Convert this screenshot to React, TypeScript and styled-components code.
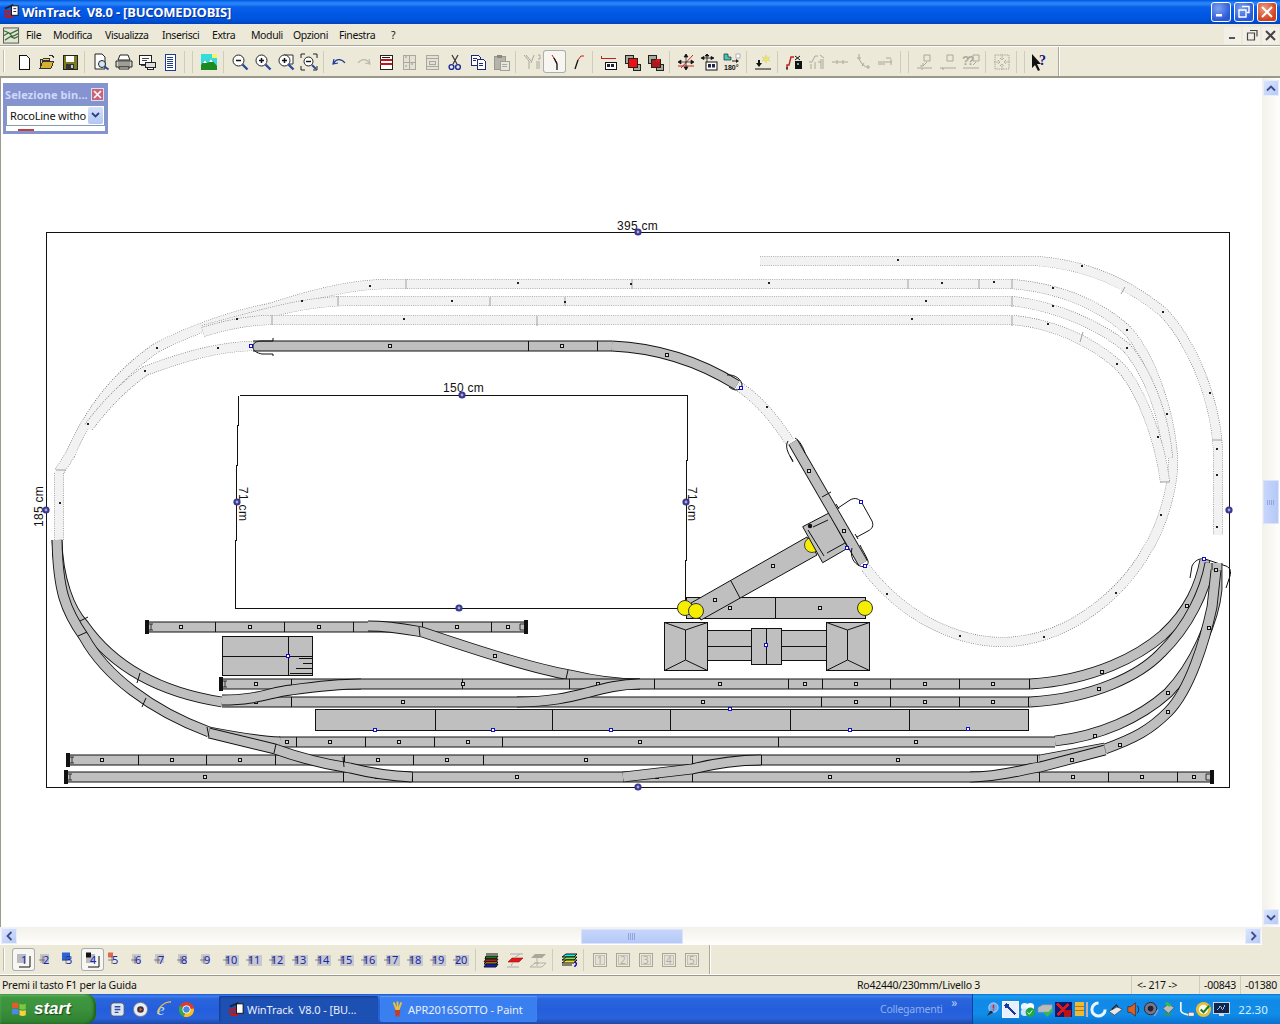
import React from 'react';
import styled, { createGlobalStyle } from 'styled-components';

const Global = createGlobalStyle`
  html, body { margin: 0; padding: 0; background: #fff; }
  * { box-sizing: border-box; }
`;
const UI = `"Noto Sans", "DejaVu Sans", sans-serif`;

const Win = styled.div`
  width: 1280px; height: 1024px; overflow: hidden; display: flex; flex-direction: column;
  background: #ece9d8; font-family: ${UI}; position: relative;
`;
const TitleBar = styled.div`
  height: 24px; flex: none; display: flex; align-items: center; padding: 0 3px 1px 3px;
  background: linear-gradient(#0053d8 0, #1f7cf6 2px, #2b86fb 4px, #0a5fe8 7px, #0058e6 14px, #0052da 20px, #0044bb 24px);
`;
const TitleText = styled.div`
  margin-left: 2px; color: #fff; font: bold 13px ${UI}; white-space: pre; flex: 1;
  letter-spacing: -0.2px; text-shadow: 1px 1px 0 #0a2f8f;
`;
const CapBtn = styled.div<{ $close?: boolean }>`
  width: 20px; height: 20px; margin-left: 3px; border: 1px solid #fff; border-radius: 3px;
  display: flex; align-items: center; justify-content: center;
  background: ${p => p.$close ? 'radial-gradient(circle at 35% 30%, #ee9a80, #d0421f 70%)' : 'radial-gradient(circle at 35% 30%, #7ea2f0, #2a59d8 70%)'};
`;
const MenuBar = styled.div`
  height: 23px; flex: none; display: flex; align-items: center; padding-left: 3px;
  border-bottom: 1px solid #fff; box-shadow: inset 0 -1px 0 #a7a595;
`;
const MenuItem = styled.div<{ $x: number }>`
  width: ${p => p.$x}px; flex: none; font-size: 10.5px; letter-spacing: -0.4px; color: #111; line-height: 16px; padding-left: 6px; white-space: nowrap;
`;
const MdiBtns = styled.div`
  margin-left: auto; display: flex; gap: 2px; padding-right: 1px;
`;
const MdiBtn = styled.div`
  width: 17px; height: 17px; display: flex; align-items: center; justify-content: center; background: #f2f0e6;
`;
const Toolbar = styled.div`
  height: 31px; flex: none; display: flex; align-items: center; padding-left: 12px; position: relative;
  border-bottom: 2px solid #9b988a;
  &::before { content: ''; position: absolute; left: 3px; top: 3px; bottom: 4px; width: 1px; background: #c0bdaf; box-shadow: 1px 0 0 #fff; }
`;
const ToolEnd = styled.div`
  width: 1px; height: 29px; background: #aca899; margin-left: 6px; box-shadow: 1px 0 0 #fff;
`;
const ToolBtn = styled.div<{ $active?: boolean }>`
  width: 23px; height: 23px; flex: none; display: flex; align-items: center; justify-content: center;
  border-radius: 3px;
  ${p => p.$active ? 'background: #f7f6f0; box-shadow: inset 0 0 0 1px #a9adb4;' : ''}
`;
const Sep = styled.div`
  width: 8px; height: 24px; flex: none; position: relative;
  &::after { content: ''; position: absolute; left: 3px; top: 1px; bottom: 1px; width: 1px; background: #cfccbc; }
`;
const Middle = styled.div`
  flex: 1; display: flex; min-height: 0; background: #fff;
`;
const Canvas = styled.div`
  flex: 1; position: relative; overflow: hidden; background: #fff; border-left: 1px solid #9c9a8e;
`;
const PlanSvg = styled.svg`
  display: block; margin-left: -1px;
`;
const Float = styled.div`
  position: absolute; left: 2px; top: 5px; width: 105px; height: 51px; background: #8594d0;
  padding: 3px; display: flex; flex-direction: column;
`;
const FloatHead = styled.div`
  display: flex; align-items: center; height: 17px; margin-left: -1px; justify-content: space-between;
  color: #cfd8f8; font: bold 11px ${UI}; white-space: nowrap; letter-spacing: 0.1px;
`;
const FloatClose = styled.div`
  width: 13px; height: 13px; margin-right: 1px; background: #c8657a; border: 1px solid #dde; display: flex; align-items: center; justify-content: center;
`;
const FloatBody = styled.div`
  background: #fff; flex: 1; position: relative; margin-top: 2px; overflow: hidden;
`;
const Combo = styled.div`
  height: 21px; border: 1px solid #7f9db9; background: #fff; display: flex; align-items: center; padding-left: 3px;
  font-size: 11px; letter-spacing: -0.2px; color: #111; white-space: nowrap; justify-content: space-between;
`;
const ComboArrow = styled.div`
  width: 15px; height: 17px; margin-right: 1px; background: linear-gradient(#d6e0fa, #b3c5f3); border-radius: 2px;
  display: flex; align-items: center; justify-content: center;
`;
const Sliver = styled.div`
  position: absolute; left: 12px; bottom: 0; width: 16px; height: 2px; background: #c04040;
`;
const VScroll = styled.div`
  width: 18px; flex: none; display: flex; flex-direction: column; padding: 2px 1px 2px 1px;
  background: linear-gradient(90deg, #f3f1ea, #fefefb);
`;
const ScrollBtn = styled.div`
  width: 16px; height: 16px; flex: none; display: flex; align-items: center; justify-content: center;
  background: linear-gradient(135deg, #dde6fd, #b6c8f5); border-radius: 2px; box-shadow: inset 0 0 0 1px #e8eefe;
`;
const VThumb = styled.div`
  width: 16px; height: 44px; margin-top: 384px; margin-bottom: auto; background: linear-gradient(90deg, #c8d6fb, #b4c8f6);
  border-radius: 2px; box-shadow: inset 0 0 0 1px #d9e3fd; display: flex; align-items: center; justify-content: center;
`;
const HScrollRow = styled.div`
  height: 18px; flex: none; display: flex; align-items: center; padding: 0 19px 0 1px; position: relative;
  background: linear-gradient(#f3f1ea, #fefefb);
`;
const HThumb = styled.div`
  width: 102px; height: 15px; margin-left: 564px; margin-right: auto; background: linear-gradient(#c8d6fb, #b4c8f6);
  border-radius: 2px; box-shadow: inset 0 0 0 1px #d9e3fd; display: flex; align-items: center; justify-content: center;
`;
const Corner = styled.div`
  position: absolute; right: 0; top: 0; bottom: 0; width: 18px; background: #ece9d8;
`;
const Grip = styled.div<{ $v?: boolean }>`
  ${p => p.$v ? 'width: 8px; height: 5px;' : 'width: 8px; height: 7px;'}
  background: repeating-linear-gradient(90deg, #8fa6dd 0 1px, transparent 1px 2px);
`;
const LayerBar = styled.div`
  height: 30px; flex: none; display: flex; align-items: center; padding-left: 12px; position: relative;
  border-bottom: 1px solid #fff;
  &::before { content: ''; position: absolute; left: 3px; top: 3px; bottom: 3px; width: 1px; background: #c0bdaf; box-shadow: 1px 0 0 #fff; }
`;
const StatusBar = styled.div`
  height: 19px; flex: none; display: flex; align-items: center; position: relative;
  border-top: 1px solid #9b988a; font-size: 10.5px; letter-spacing: -0.23px; color: #111;
`;
const StatusCell = styled.div<{ $w: number; $pl: number; $line?: boolean }>`
  width: ${p => p.$w}px; flex: none; padding-left: ${p => p.$pl}px; white-space: nowrap; line-height: 18px;
  ${p => p.$line ? 'border-left: 1px solid #cfccbc;' : ''}
`;
const Taskbar = styled.div`
  height: 30px; flex: none; display: flex; align-items: stretch; color: #fff;
  background: linear-gradient(#1f55c9 0, #3d80ee 2px, #2a64dc 5px, #245edb 16px, #2a63dc 24px, #1c49a8 30px);
`;
const StartBtn = styled.div`
  width: 96px; flex: none; display: flex; align-items: center; padding-left: 10px; gap: 4px;
  border-radius: 0 10px 10px 0; box-shadow: inset -2px 0 3px #1b5a1b, inset 0 2px 2px #6fbf6f;
  background: linear-gradient(#3f9a40, #3c913c 50%, #2d7f2f);
`;
const StartText = styled.div`
  font: italic bold 17px "Liberation Sans", sans-serif; color: #fff; text-shadow: 1px 1px 1px #1a4a1a;
`;
const Quick = styled.div`
  display: flex; align-items: center; padding-left: 10px; width: 123px; flex: none;
`;
const QuickIcon = styled.div`
  width: 23px; display: flex; justify-content: center;
`;
const TaskBtn = styled.div<{ $on?: boolean; $w: number }>`
  width: ${p => p.$w}px; flex: none; margin: 2px 2px 2px 0; display: flex; align-items: center; padding-left: 9px; gap: 2px;
  font-size: 11px; white-space: pre; border-radius: 2px; color: #e8eefc; letter-spacing: -0.1px;
  background: ${p => p.$on ? '#1d50b3' : '#3a7fef'};
  ${p => p.$on ? 'box-shadow: inset 1px 1px 2px #123a8a;' : 'box-shadow: inset 0 1px 1px #5f9bf5;'}
`;
const Links = styled.div`
  margin-left: auto; width: 93px; flex: none; display: flex; color: #8fb0ea; font-size: 10.5px; letter-spacing: -0.25px; align-items: center; position: relative; padding-left: 1px;
`;
const Chevron = styled.div`
  position: absolute; right: 15px; top: 2px; font-size: 12px; color: #b6cdf5; line-height: 14px;
`;
const Tray = styled.div`
  width: 308px; flex: none; display: flex; align-items: center; padding-left: 11px;
  background: linear-gradient(#0d6fd8 0, #18a0f0 2px, #1289e6 6px, #0f8de8 20px, #0b6fcf 30px);
  border-left: 1px solid #0a3f9a;
`;
const TrayIcon = styled.div`
  width: 17.6px; flex: none; display: flex; justify-content: center;
`;
const Clock = styled.div`
  margin-left: 8px; color: #d8ecfc; font-size: 11.5px;
`;

type Node = React.ReactNode;
const I = ({ c, s = 18 }: { c: Node; s?: number }) => (
  <svg width={s} height={s} viewBox="0 0 18 18" shapeRendering="crispEdges">{c}</svg>
);
const A = ({ c, s = 18 }: { c: Node; s?: number }) => (
  <svg width={s} height={s} viewBox="0 0 18 18">{c}</svg>
);
const G = '#aaa89c';
const lens = (
  <>
    <circle cx="7.5" cy="7.5" r="5.5" fill="#fff" stroke="#222" />
    <path d="M11.5 11.5l5 5" stroke="#2b4a9a" strokeWidth="2.4" />
  </>
);
const dis = (d: string) => <path d={d} fill="none" stroke={G} strokeWidth="1" />;

const icons: Record<string, Node> = {
  new: <I c={<path d="M4 2h7l3 3v11H4z" fill="#fff" stroke="#111" />} />,
  open: <I c={<><path d="M2 6h3l1-1h5v2H5l-3 8z" fill="#e8d070" stroke="#333" /><path d="M2 15l3-7h11l-3 7z" fill="#d8b030" stroke="#333" /><path d="M11 3l3-1 2 3" fill="none" stroke="#333" /></>} />,
  save: <I c={<><rect x="2" y="2" width="14" height="14" fill="#7c7c20" stroke="#222" /><rect x="5" y="3" width="8" height="6" fill="#fff" /><rect x="5" y="11" width="8" height="5" fill="#333" /><rect x="10" y="12" width="2" height="3" fill="#ccc" /></>} />,
  preview: <A c={<><path d="M3 1h7l3 3v12H3z" fill="#fff" stroke="#222" /><circle cx="10" cy="11" r="3.5" fill="#cfe8f8" stroke="#222" /><path d="M12.5 13.5l4 3" stroke="#2b4a9a" strokeWidth="2" /></>} />,
  print: <A c={<><path d="M5 2h8l2 5H3z" fill="#fff" stroke="#222" /><path d="M1 8h16v6H1z" fill="#d8d5c8" stroke="#222" /><path d="M4 14h10v2H4z" fill="#fff" stroke="#222" /><path d="M3 10h12M3 12h12" stroke="#666" /></>} />,
  setup: <I c={<><rect x="1" y="2" width="12" height="9" fill="#fff" stroke="#222" /><path d="M3 12h7M4 5h7M4 7h5" stroke="#444" /><rect x="7" y="9" width="10" height="5" fill="#ddd" stroke="#222" /><path d="M9 14h6v2H9z" fill="#fff" stroke="#222" /></>} />,
  list: <I c={<><rect x="4" y="1" width="10" height="16" fill="#fff" stroke="#223a8a" /><path d="M6 4h6M6 6h6M6 8h6M6 10h6M6 12h6M6 14h6" stroke="#223a8a" /></>} />,
  pic: <A c={<><rect x="1" y="1" width="16" height="16" fill="#30d8e8" /><rect x="1" y="1" width="16" height="5" fill="#30e0d8" /><rect x="12" y="1" width="5" height="4" fill="#f4f070" /><path d="M1 17V12l4-5 3 3 3-4 6 7v4z" fill="#1c8a20" /><path d="M5 7l2 3H3zM11 6l2 3H9z" fill="#fff" /></>} />,
  zo: <A c={<>{lens}<path d="M5 7.5h5" stroke="#111" strokeWidth="1.5" /></>} />,
  zi: <A c={<>{lens}<path d="M5 7.5h5M7.5 5v5" stroke="#111" strokeWidth="1.5" /></>} />,
  zw: <A c={<><path d="M7 2h9v9h-5" fill="#fff" stroke="#333" />{lens}<path d="M5 7.5h5M7.5 5v5" stroke="#111" strokeWidth="1.5" /></>} />,
  zf: <A c={<><path d="M1 5V1h4M13 1h4v4M1 13v4h4M13 17h4v-4" fill="none" stroke="#222" /><circle cx="8.5" cy="8.5" r="4.5" fill="#fff" stroke="#222" /><path d="M6 8.5h5" stroke="#111" strokeWidth="1.4" /><path d="M12 12l4 4" stroke="#2b4a9a" strokeWidth="2" /></>} />,
  undo: <A c={<path d="M3 6l-1 5 5-1M3 10c2-4 7-5 11 0" fill="none" stroke="#1c3a9a" strokeWidth="1.2" />} />,
  redo: <A c={<path d="M15 6l1 5-5-1M15 10c-2-4-7-5-11 0" fill="none" stroke="#bbb9ae" strokeWidth="1.2" />} />,
  redd: <I c={<><rect x="3" y="2" width="12" height="14" fill="#fff" stroke="#222" /><path d="M3 6h12v2H3zM3 10h12v2H3z" fill="#c01818" /><path d="M5 4h8" stroke="#222" /></>} />,
  dd1: <I c={<><rect x="3" y="2" width="12" height="14" fill="#e4e2d4" stroke={G} /><path d="M9 2v14M3 9h12" stroke={G} /><path d="M5 4h2M11 11h2M5 13h2" stroke="#bbb" strokeWidth="2" /></>} />,
  dd2: <I c={<><rect x="3" y="2" width="12" height="14" fill="#e4e2d4" stroke={G} /><path d="M3 5h12M3 13h12M6 8h6v3H6z" fill="none" stroke={G} /></>} />,
  cut: <A c={<><path d="M6 2l5 9M12 2L7 11" stroke="#333" strokeWidth="1.2" /><circle cx="5.5" cy="14" r="2.4" fill="none" stroke="#1c2a9a" strokeWidth="1.4" /><circle cx="12" cy="14" r="2.4" fill="none" stroke="#1c2a9a" strokeWidth="1.4" /></>} />,
  copy: <I c={<><path d="M2 2h7l2 2v8H2z" fill="#fff" stroke="#1c2a7a" /><path d="M8 6h6l2 2v8H8z" fill="#fff" stroke="#1c2a7a" /><path d="M4 5h4M4 7h3M10 10h4M10 12h4" stroke="#1c2a7a" /></>} />,
  paste: <I c={<><rect x="2" y="3" width="11" height="13" fill="#b6b4aa" stroke="#9a988c" /><rect x="5" y="2" width="5" height="3" fill="#8a887c" /><rect x="8" y="8" width="9" height="9" fill="#e8e6da" stroke="#a0a094" /><path d="M10 11h5M10 13h5" stroke="#aaa" /></>} />,
  sw: <A c={dis('M1 2l5 6v8M3 2l5 6M11 2l-3 8M15 2h2v4h-2M14 8v8M16 8v8')} />,
  cr: <A c={<><path d="M6 2l5 8" stroke="#c02020" strokeWidth="1" fill="none" /><path d="M8 5l3 6v6" stroke="#111" strokeWidth="1.3" fill="none" /></>} />,
  cl: <A c={<><path d="M9 7l3-4h3" stroke="#c02020" fill="none" /><path d="M9 7l-2 6-1 3" stroke="#111" strokeWidth="1.3" fill="none" /></>} />,
  rail: <I c={<><path d="M1 3v2h14v1" stroke="#c02020" fill="none" /><rect x="5" y="9" width="11" height="7" fill="#fff" stroke="#111" /><rect x="7" y="11" width="3" height="3" fill="#223" /><rect x="11" y="11" width="3" height="3" fill="#223" /></>} />,
  sq1: <I c={<><rect x="2" y="2" width="8" height="8" fill="#a8a89c" stroke="#222" /><rect x="10" y="11" width="7" height="6" fill="#a8a89c" stroke="#222" /><rect x="5" y="5" width="9" height="9" fill="#ee1010" stroke="#222" /></>} />,
  sq2: <I c={<><rect x="2" y="2" width="8" height="8" fill="#a8a89c" stroke="#222" /><rect x="10" y="11" width="7" height="6" fill="#a8a89c" stroke="#222" /><rect x="5" y="6" width="9" height="8" fill="#b01818" stroke="#222" /><rect x="10" y="6" width="4" height="3" fill="#d01818" /></>} />,
  mv: <A c={<><path d="M1 13h16" stroke="#d02020" /><path d="M4 15l12-13" stroke="#d02020" /><path d="M9 1v16M2 9h14M9 1l-2 3h4zM9 17l-2-3h4zM1 9l3-2v4zM17 9l-3-2v4z" fill="#111" stroke="#111" strokeWidth=".7" /></>} />,
  mvb: <A c={<><path d="M7 1v9M2 5h11M7 1L5 3h4zM1 5l3-1.5v3zM14 5l-3-1.5v3z" fill="#111" stroke="#111" strokeWidth=".8" /><rect x="6" y="9" width="11" height="8" fill="#fff" stroke="#111" /><rect x="8" y="11" width="3" height="3.5" fill="#224" /><rect x="12" y="11" width="3" height="3.5" fill="#224" /></>} />,
  rot: <svg width="18" height="18" viewBox="0 0 18 18"><path d="M1 1h4v3h3v3H1z" fill="#40c8b8" stroke="#222" strokeWidth=".7" /><path d="M9 8h4" stroke="#222" /><path d="M13 6l3 2-3 2z" fill="#222" /><rect x="13" y="1" width="4" height="4" fill="#fff" stroke="#999" strokeWidth=".7" /><text x="1" y="17" fontSize="7" fontWeight="bold" fontFamily="Liberation Sans" fill="#111">180°</text></svg>,
  star: <A c={<><path d="M12 2l1 3 3-1-2 2 2 2-3-1-1 3-1-3-3 1 2-2-2-2 3 1z" fill="#f0e860" stroke="#d8d070" strokeWidth=".6" /><path d="M1 16h16" stroke="#111" /><path d="M5 7v4" stroke="#111" strokeWidth="2" /><path d="M2 10h6l-3 4z" fill="#111" /></>} />,
  red2: <A c={<><path d="M2 16v-4h2l2-8h3" stroke="#c02020" strokeWidth="1.4" fill="none" /><path d="M2 17v-3" stroke="#111" /><path d="M10 3l5 4M15 3l-5 4" stroke="#111" /><rect x="10" y="8" width="7" height="8" fill="#111" /><rect x="12" y="10" width="2" height="2" fill="#6aa" /></>} />,
  d1: <A c={dis('M1 9h3l3-6h3M3 16v-5M7 16v-7M12 2l4 3M15 6v10M13 6v10M10 9h3')} />,
  d2: <A c={dis('M1 9h16M6 7v4M12 7v4')} />,
  d3: <A c={dis('M5 1v5l3 5 4 3h4M3 5h4M10 10l-2 3M14 12v4')} />,
  d4: <A c={dis('M1 11h7M9 5h5M1 9h14M14 6v6')} />,
  b1: <A c={dis('M8 2h6v6H8zM1 15h5v2M6 15h10M11 9l-4 4M4 13h3v-3')} />,
  b2: <A c={dis('M8 2h6v6H8zM1 15h3v2M3 15h14')} />,
  b3: <svg width="18" height="18" viewBox="0 0 18 18"><text x="0" y="12" fontSize="12" fontWeight="bold" fontFamily="Liberation Sans" fill={G}>?</text><text x="5" y="12" fontSize="12" fontWeight="bold" fontFamily="Liberation Sans" fill={G}>?</text><path d="M11 2h6v6h-6zM1 15h16M14 9l-3 3" fill="none" stroke={G} /></svg>,
  b4: <A c={<path d="M2 2h14v14H2zM9 1v6M7 5l2 2 2-2M9 17v-6M7 13l2-2 2 2M1 9h6M5 7l2 2-2 2M17 9h-6M13 7l-2 2 2 2" fill="none" stroke={G} strokeDasharray="1.5 .8" />} />,
  help: <svg width="20" height="20" viewBox="0 0 20 20"><path d="M1 2v14l3-3 3 6 2-1-3-6h4z" fill="#111" /><text x="8" y="13" fontSize="14" fontWeight="bold" fontFamily="Liberation Serif" fill="#101080">?</text></svg>,
};

const top = ['new','open','save','|','preview','print','setup','list','|','|','pic','|','zo','zi','zw','zf','|','undo','redo','redd','dd1','dd2','cut','copy','paste','|','sw','cr*','cl','|','rail','sq1','sq2','|','mv','mvb','rot','|','star','|','red2','d1','d2','d3','d4','|','|','b1','b2','b3','|','b4','|','|','help'];

const chipColor = (n: number) => n === 3 ? '#2a62d8' : n === 4 ? '#111' : n === 5 ? '#e06848' : '#b8bac4';
const LayerIcon = ({ n, on }: { n: number; on: boolean }) => (
  <svg width="18" height="18" viewBox="0 0 18 18">
    <rect x={n > 9 ? 3 : 2} y={n > 9 ? 4 : 3} width={n > 9 ? 14 : 9} height={n > 9 ? 11 : 9} fill={on ? '#b8bac4' : n > 5 ? '#c8c9cf' : n === 2 ? '#c2c3cb' : 'transparent'} />
    {n === 3 || n === 4 || n === 5 ? <rect x={n === 4 ? 2 : 1} y="1.5" width={n === 3 ? 8 : 5} height={n === 3 ? 8 : 5} fill={chipColor(n)} /> : null}
    {on ? <path d="M4 16h11v-11" fill="none" stroke="#111" /> : <path d="M1 9h6M5 5v8" stroke="#444" strokeWidth=".6" />}
    <text x={n > 9 ? 3 : on ? 6 : 5} y="13" fontSize="11" letterSpacing="-.4" fontFamily="Noto Sans" fill="#1a28a8">{n}</text>
  </svg>
);
const BoxIcon = ({ n }: { n: number }) => (
  <svg width="16" height="16" viewBox="0 0 16 16">
    <rect x="1.5" y="1.5" width="13" height="13" fill="none" stroke="#a8a69a" />
    <rect x="3.5" y="3.5" width="9" height="9" fill="#e4e2d4" stroke="#c4c2b6" />
    <text x="5" y="12" fontSize="10" fontFamily="Noto Sans" fill="#b0aea2">{n}</text>
  </svg>
);
const lay1 = <A c={<><path d="M3 5h12l-2 3H2z" fill="#1a7a1a" stroke="#111" /><path d="M3 8h12l-2 3H1z" fill="#c01818" stroke="#111" /><path d="M3 11h12l-2 2H1z" fill="#f0e030" stroke="#111" /><path d="M3 13h12l-2 3H1z" fill="#1818d0" stroke="#111" /><path d="M3 3h12" stroke="#111" /></>} />;
const lay2 = <A c={<><path d="M4 3h13" stroke="#aaa" /><path d="M6 7h11l-4 4H2z" fill="#e01818" stroke="#a01010" strokeWidth=".6" /><path d="M1 16h12M7 11l-2 4M14 3L8 7" stroke="#aaa" /></>} />;
const lay3 = <A c={<><path d="M6 3h11l-4 4H2z" fill="#a8a89c" /><path d="M1 16h12l4-4H6zM8 7v8M5 12h5" fill="none" stroke="#b4b2a6" /></>} />;
const lay4 = <A c={<><path d="M6 3h11l-3 3H2z" fill="#20e8e0" stroke="#111" /><path d="M6 6h11l-3 3H2z" fill="#80e840" stroke="#111" /><path d="M6 9h11l-3 3H2z" fill="#f0e030" stroke="#111" /><path d="M2 14h10" stroke="#111" /><path d="M14 11c3 0 3 3 1 4v1" stroke="#1818b0" strokeWidth="1.6" fill="none" /></>} />;

const Track = ({ d, w = 9 }: { d: string; w?: number }) => (
  <g fill="none">
    <path d={d} stroke="#111" strokeWidth={w + 1.8} />
    <path d={d} stroke="#bfbfbf" strokeWidth={w} />
  </g>
);
const Ghost = ({ d, w = 9 }: { d: string; w?: number }) => (
  <g fill="none">
    <path d={d} stroke="#6f6f6f" strokeWidth={w + 1} strokeDasharray="1 1.2" />
    <path d={d} stroke="#f2f2f2" strokeWidth={w - 0.2} />
  </g>
);
const Marks = ({ pts, blue, s = 3 }: { pts: number[][]; blue?: boolean; s?: number }) => (
  <g fill={blue ? '#fff' : '#ddd'} stroke={blue ? '#1010c8' : '#111'} strokeWidth="1" shapeRendering="crispEdges">
    {pts.map(([x, y], i) => <rect key={i} x={x - s / 2 - .5} y={y - s / 2 - .5} width={s} height={s} />)}
  </g>
);
const Tiny = ({ pts }: { pts: number[][] }) => (
  <g fill="#222">{pts.map(([x, y], i) => <rect key={i} x={x - 1} y={y - 1} width="2" height="2" />)}</g>
);
const CNode = ({ x, y }: { x: number; y: number }) => (
  <g><circle cx={x} cy={y} r="3.6" fill="#38388e" /><circle cx={x} cy={y} r="1.4" fill="#a8a8d8" /></g>
);
const HRow = ({ y, x0, x1, ticks, marks }: { y: number; x0: number; x1: number; ticks: number[]; marks: number[] }) => (
  <>
    <Track d={`M${x0} ${y}H${x1}`} />
    <g stroke="#111" shapeRendering="crispEdges">{ticks.map(t => <path key={t} d={`M${t + .5} ${y - 5}V${y + 5}`} />)}</g>
    <Marks pts={marks.map(m => [m, y])} />
  </>
);
const Bumper = ({ x, y, flip }: { x: number; y: number; flip?: boolean }) => (
  <g>
    <rect x={x} y={y - 7} width="4" height="14" fill="#111" />
    <path d={flip ? `M${x} ${y - 3}h-4M${x} ${y + 3}h-4M${x - 4} ${y - 3}v6` : `M${x + 4} ${y - 3}h4M${x + 4} ${y + 3}h4M${x + 6} ${y - 3}v6`} stroke="#111" fill="none" strokeWidth=".8" />
  </g>
);
const Lbl = ({ x, y, t, rot }: { x: number; y: number; t: string; rot?: number }) => (
  <text x={x} y={y} fontSize="12" letterSpacing=".3" fontFamily="Liberation Sans" fill="#111" transform={rot ? `rotate(${rot} ${x} ${y})` : undefined}>{t}</text>
);

const ghostPaths = [
  'M760 261H1037C1090 265 1130 285 1163 312C1190 340 1215 395 1218 450V535',
  'M59 540V472L70 455C85 420 110 380 156 348C180 335 230 315 270 308C310 295 350 284 390 284H1012C1060 288 1100 305 1127 330C1150 355 1170 410 1173 458C1174 490 1160 530 1147 550C1125 590 1070 642 1002 642C960 642 905 620 865 567',
  'M203 330C260 315 300 302 345 301H1012C1055 306 1100 325 1127 348C1150 375 1165 420 1168 458',
  'M203 332C225 325 250 320 273 320H1012C1050 323 1090 340 1117 364C1140 385 1160 440 1165 482',
  'M252 346C215 347 180 358 145 371C125 385 105 405 88 428',
  'M738 386C760 400 775 420 790 442',
];

const Plan = () => (
  <PlanSvg width="1262" height="849" viewBox="0 78 1262 849">
    <g fill="none" stroke="#111" shapeRendering="crispEdges">
      <rect x="46.5" y="232.5" width="1183" height="555" />
      <path d="M239.5 395.5H687.5V460H686.5V560H685.5V608.5H235.5V540H236.5V465H237.5V425H238.5V395.5" />
    </g>
    {ghostPaths.map((d, i) => <Ghost key={i} d={d} />)}
    <g stroke="#a0a0a0" fill="none">
      <path d="M406 279v10M632 279v10M908 279v10M979 279v10M1012 279v10M338 296v10M565 297v9M1012 297v10M272 315v10M537 316v10M1012 316v10M56 470h10M1212 440h10M1160 482h10M490 297v9M1083 332l-3 10M1125 287l-4 7" />
    </g>
    <Tiny pts={[[898,260],[1082,266],[1163,312],[1210,393],[1217,449],[1217,475],[1217,527],[769,283],[942,283],[994,282],[1053,288],[1127,330],[1167,414],[926,301],[1053,306],[1127,348],[912,319],[1048,324],[1117,364],[1158,437],[1161,515],[370,286],[518,283],[452,301],[404,319],[302,301],[237,319],[157,348],[145,371],[218,348],[88,424],[60,503],[631,284],[565,302],[1116,593],[1044,637],[960,636],[887,594],[767,407]]} />

    <rect x="686.5" y="597.5" width="179" height="21" fill="#bfbfbf" stroke="#111" />
    <path d="M775.5 597V618" stroke="#111" />
    <path d="M691 603L807 537L817 555L701 620Z" fill="#bfbfbf" stroke="#111" />
    <circle cx="812" cy="545" r="7.5" fill="#f5ee00" stroke="#444" />
    <path d="M802.7 526.7L829 513L848 548L822.7 562.7Z" fill="#bfbfbf" stroke="#111" />
    <g stroke="#111" fill="none" strokeWidth="1">
      <path d="M808 530L824 556M813 527L828 520M827 553L845 543M731 581L740 598" />
    </g>
    <Track d="M793 442L863 563" w={9} />
    <path d="M822 497l9 -5" stroke="#111" />
    <circle cx="685" cy="608" r="7.5" fill="#f5ee00" stroke="#333" />
    <circle cx="696" cy="611" r="7.5" fill="#f5ee00" stroke="#333" />
    <circle cx="865" cy="608" r="7.5" fill="#f5ee00" stroke="#333" />
    <Marks pts={[[773,566],[715,600],[730,608],[820,608],[809,471],[844,531]]} />
    <circle cx="810" cy="526" r="2.2" fill="#111" />

    <g fill="#bfbfbf" stroke="#111" shapeRendering="crispEdges">
      <rect x="706.5" y="630.5" width="120" height="30" />
      <path d="M706.5 646.5H826.5" fill="none" />
      <rect x="751.5" y="628.5" width="30" height="36" />
      <path d="M766.5 628V664" fill="none" />
    </g>
    <g fill="#bfbfbf" stroke="#111">
      <rect x="664.5" y="622.5" width="43" height="48" />
      <rect x="826.5" y="622.5" width="43" height="48" />
      <path d="M664.5 622.5L685.5 630L707.5 622.5M664.5 670.5L685.5 660L707.5 670.5M685.5 630V660M826.5 622.5L847.5 630L869.5 622.5M826.5 670.5L847.5 660L869.5 670.5M847.5 630V660" fill="none" />
    </g>
    <Marks blue pts={[[766,645]]} />

    <HRow y={346} x0={253} x1={612} ticks={[528,597]} marks={[390,562]} />
    <Track d="M612 346C660 348 700 362 737 385" />
    <Marks pts={[[667,355]]} />
    <g fill="none" stroke="#111">
      <path d="M273 338V341H262C256 341 253 343 253 347C253 351 257 353 262 354H273V356" />
      <path d="M727 375C735 374 742 380 742 385C742 390 735 392 729 387" />
      <path d="M788 441C785 446 787 452 793 461M795 438C800 441 803 447 805 453M790 456l3 6" />
      <path d="M838 508L850 500C855 497 860 499 862 503L872 521C874 526 872 529 868 531L857 537M836 504l3 5M855 534l3 5" />
      <path d="M852 548C850 556 853 563 860 566C865 568 869 565 868 561C866 555 862 550 860 545" />
      <path d="M1190 578L1192 566C1195 560 1200 558 1205 559L1226 566C1231 568 1231 572 1230 576L1226 588" />
    </g>

    <HRow y={627} x0={147} x1={526} ticks={[215,284,353,422,491]} marks={[181,250,319,388,457,508]} />
    <Track d="M368 626C390 626 405 629 422 632C470 648 530 668 570 675C595 681 620 684 640 684" />
    <path d="M419 627l1 9M568 670l-2 9" stroke="#111" />
    <Marks pts={[[495,656]]} />
    <Bumper x={145} y={627} /><Bumper x={524} y={627} flip />

    <Track d="M222 702C145 690 105 655 84 625C70 610 58 580 57 540" />
    <Track d="M209 732C150 710 105 675 84 637C65 610 58 590 57 540" />
    <path d="M80 621l8 -4M78 636l9 -4M140 673l-3 10M146 698l-4 9" stroke="#111" />
    <Track d="M1030 684C1095 680 1140 655 1163 635C1190 610 1200 585 1205 560" />
    <Track d="M1030 702C1095 698 1140 675 1161 653C1190 625 1205 590 1210 563" />
    <Track d="M1055 741C1100 736 1140 718 1168 693C1195 665 1214 620 1217 590V563" />
    <Track d="M1105 749C1135 738 1150 730 1168 712C1190 690 1205 640 1212 607L1216 570" />

    <HRow y={684} x0={221} x1={1030} ticks={[291,360,462,569,654,788,822,890,959,1029]} marks={[256,463,598,720,805,856,925,993]} />
    <HRow y={702} x0={222} x1={1030} ticks={[291,517,821,890,959,1028]} marks={[256,403,552,703,856,925,993]} />
    <Track d="M222 700C260 700 270 692 291 690C320 686 340 684 361 684" />
    <Track d="M517 702C550 702 570 697 586 693C605 688 620 684 640 684" />
    <Bumper x={219} y={684} />
    <g stroke="#111" strokeWidth="1" shapeRendering="crispEdges">
      <rect x="315.5" y="709.5" width="713" height="21" fill="#bfbfbf" />
      <path d="M435.5 709V731M552.5 709V731M670.5 709V731M790.5 709V731M909.5 709V731" />
    </g>
    <Marks blue pts={[[375,730],[493,730],[611,730],[850,730],[968,729],[730,709]]} />

    <HRow y={742} x0={279} x1={1055} ticks={[296,365,434,502,778]} marks={[287,330,399,468,640,916]} />
    <HRow y={760} x0={68} x1={1040} ticks={[138,206,275,344,413,483,692,761,1037]} marks={[102,172,240,309,378,447,586,726,898,1072]} />
    <HRow y={777} x0={66} x1={1212} ticks={[343,412,623,692,970,1039,1108,1177]} marks={[205,377,517,657,830,1004,1073,1142,1194]} />
    <Track d="M209 732C235 737 260 741 280 742" />
    <Track d="M209 733L275 749C300 758 330 765 350 768C370 773 390 776 412 777" />
    <path d="M207 727l2 10M276 744l-2 9M343 757l1 10" stroke="#111" />
    <Track d="M623 777L692 769C720 762 740 760 761 760" />
    <Track d="M1040 760L1105 748" />
    <Track d="M970 777C1000 777 1020 770 1040 767L1105 750" />
    <Marks pts={[[1102,672],[1099,689],[1095,736],[1168,693],[1168,712],[1187,606],[1209,628],[1216,570],[1120,745],[1072,760]]} />
    <Bumper x={66} y={760} /><Bumper x={64} y={777} /><Bumper x={1210} y={777} flip />

    <Marks blue s={3} pts={[[251,346],[741,388],[847,548],[861,502],[1204,559],[865,566]]} />
    <g shapeRendering="crispEdges" fill="#bfbfbf" stroke="#111">
      <rect x="222.5" y="636.5" width="90" height="39" />
      <path d="M222.5 656.5H312.5M288.5 636.5V675.5M299 658.5h13M303 663.5h9M296 668.5h16M290 673.5h22" fill="none" />
    </g>
    <Marks blue s={3} pts={[[288,656]]} />

    <Lbl x={617} y={230} t="395 cm" />
    <Lbl x={443} y={392} t="150 cm" />
    <Lbl x={43} y={527} t="185 cm" rot={-90} />
    <Lbl x={239} y={487} t="71 cm" rot={90} />
    <Lbl x={688} y={487} t="71 cm" rot={90} />
    {[[638,232],[462,395],[46,510],[1229,510],[638,787],[237,502],[686,502],[459,608]].map(([x, y]) => <CNode key={`${x}${y}`} x={x} y={y} />)}
  </PlanSvg>
);

const menus: [string, number][] = [['File',27],['Modifica',52],['Visualizza',57],['Inserisci',50],['Extra',39],['Moduli',42],['Opzioni',46],['Finestra',52],['?',12]];

const tray: Node[] = [
  <A s={17} c={<><circle cx="10" cy="7" r="5" fill="#70a8f0" stroke="#fff" strokeWidth=".6" /><path d="M10 4v4M10 9v1" stroke="#d02020" strokeWidth="1.5" /><path d="M3 16l4-6 3 2z" fill="#223" /></>} />,
  <I s={17} c={<><rect x="1" y="1" width="16" height="16" fill="#e8f0ff" stroke="#fff" /><path d="M4 4l10 10" stroke="#1a3a9a" strokeWidth="2.4" /><circle cx="5" cy="5" r="2.5" fill="#1a3a9a" /></>} />,
  <A s={17} c={<><circle cx="6" cy="6" r="4" fill="#e8f4ff" /><circle cx="12" cy="6" r="4" fill="#fff" /><circle cx="6" cy="12" r="4" fill="#cfe4fa" /><circle cx="12" cy="12" r="5" fill="#20a840" /><path d="M9 12l2 2 3-4" stroke="#fff" fill="none" /></>} />,
  <A s={17} c={<><path d="M1 7l5-3h10v8H1z" fill="#bbb" stroke="#888" strokeWidth=".6" /><path d="M8 12l3 3 5-6" stroke="#30c040" strokeWidth="2.4" fill="none" /></>} />,
  <I s={17} c={<><rect x="0" y="1" width="18" height="16" fill="#101870" /><path d="M2 3l13 12M14 3L3 15" stroke="#e01818" strokeWidth="3" /><rect x="9" y="10" width="8" height="7" fill="#c01010" /></>} />,
  <I s={17} c={<><rect x="3" y="1" width="10" height="15" fill="#f0b838" /><path d="M3 6h10M3 10h10" stroke="#b07808" /><path d="M16 1v16" stroke="#caa" strokeWidth="2" /></>} />,
  <A s={17} c={<path d="M9 2a7 7 0 1 0 7 7" fill="none" stroke="#eaf6ff" strokeWidth="3.2" />} />,
  <A s={17} c={<><path d="M2 11l9-5 5 3-8 6z" fill="#e8e8e8" stroke="#333" strokeWidth=".7" /><path d="M5 9l5-5 2 3" stroke="#222" fill="none" strokeWidth="1.2" /></>} />,
  <A s={17} c={<><path d="M6 6H3v6h3l5 4V2z" fill="#e06020" stroke="#311" strokeWidth=".6" /><path d="M13 5c2 2 2 6 0 8" stroke="#222" fill="none" /></>} />,
  <A s={17} c={<><circle cx="8" cy="8" r="6.5" fill="#778" stroke="#223" /><circle cx="8" cy="8" r="3" fill="#223" /><path d="M12 16l4-7" stroke="#80a0e0" strokeWidth="1.6" /></>} />,
  <A s={17} c={<><path d="M3 8l6-5 6 4-6 6z" fill="#bbb" stroke="#444" strokeWidth=".6" /><path d="M6 2l5 3" stroke="#30c040" strokeWidth="3" /><path d="M4 14h8" stroke="#30a040" strokeWidth="2" /></>} />,
  <A s={17} c={<><path d="M3 1v9c0 3 5 4 9 5" stroke="#f4f4f4" strokeWidth="1.8" fill="none" /><rect x="11" y="12" width="6" height="4" fill="#eee" stroke="#555" strokeWidth=".5" /></>} />,
  <A s={17} c={<><circle cx="9" cy="9" r="8" fill="#e8c030" /><circle cx="9" cy="9" r="5" fill="#f8f8f0" /><path d="M6 9l3 3 6-7" stroke="#207820" strokeWidth="2.2" fill="none" /></>} />,
  <I s={17} c={<><rect x="1" y="2" width="16" height="11" fill="#14244a" stroke="#cde" /><path d="M6 15h6" stroke="#cde" strokeWidth="2" /><path d="M4 10l4-5 2 4 3-5" stroke="#8cf" fill="none" /></>} />,
];

export default function App() {
  return (
    <Win>
      <Global />
      <TitleBar>
        <svg width="17" height="17" viewBox="0 0 18 18">
          <path d="M1 9h9M1 12h9M2 15h9" stroke="#c01818" strokeWidth="2" /><path d="M2 6l9-4" stroke="#223" strokeWidth="2" />
          <rect x="9" y="3" width="7" height="10" fill="#fff" stroke="#111" /><path d="M11 6h3M11 9h3" stroke="#223" />
        </svg>
        <TitleText>WinTrack  V8.0 - [BUCOMEDIOBIS]</TitleText>
        <CapBtn><svg width="12" height="12" viewBox="0 0 12 12"><rect x="1" y="8" width="6" height="2.5" fill="#fff" /></svg></CapBtn>
        <CapBtn><svg width="14" height="14" viewBox="0 0 14 14"><path d="M5 1.500h7v6h-2M2 5h7v7H2z" fill="none" stroke="#fff" strokeWidth="1.4" /></svg></CapBtn>
        <CapBtn $close><svg width="12" height="12" viewBox="0 0 12 12"><path d="M1 1l10 10M11 1L1 11" stroke="#fff" strokeWidth="2" /></svg></CapBtn>
      </TitleBar>
      <MenuBar>
        <svg width="17" height="17" viewBox="0 0 18 18">
          <rect x="0.5" y="1" width="16" height="16" fill="#dfe6d2" stroke="#555" />
          <path d="M1 4l7 3 8-4M1 9l5-3 4 4 6-3M2 14l6-4 4 2 4-2" stroke="#3c6a3c" fill="none" strokeWidth="1.3" />
        </svg>
        {menus.map(([m, w]) => <MenuItem key={m} $x={w}>{m}</MenuItem>)}
        <MdiBtns>
          <MdiBtn><svg width="10" height="10"><rect x="1" y="7" width="6" height="2" fill="#555" /></svg></MdiBtn>
          <MdiBtn><svg width="12" height="12" viewBox="0 0 12 12"><path d="M4 1.500h7v6M1.500 4h7v7h-7z" fill="none" stroke="#444" strokeWidth="1.2" /></svg></MdiBtn>
          <MdiBtn><svg width="11" height="11" viewBox="0 0 11 11"><path d="M1 1l9 9M10 1l-9 9" stroke="#444" strokeWidth="2" /></svg></MdiBtn>
        </MdiBtns>
      </MenuBar>
      <Toolbar>
        {top.map((t, i) => t === '|' ? <Sep key={i} /> : (
          <ToolBtn key={i} $active={t.endsWith('*')}>{icons[t.replace('*', '')]}</ToolBtn>
        ))}
        <ToolEnd />
      </Toolbar>
      <Middle>
        <Canvas>
          <Plan />
          <Float>
            <FloatHead>
              <span>Selezione bin...</span>
              <FloatClose><svg width="9" height="9" viewBox="0 0 9 9"><path d="M1 1l7 7M8 1L1 8" stroke="#fff" strokeWidth="1.6" /></svg></FloatClose>
            </FloatHead>
            <FloatBody>
              <Combo>
                RocoLine witho
                <ComboArrow><svg width="9" height="7" viewBox="0 0 9 7"><path d="M1 1l3.500 3.500L8 1" stroke="#2a3f8a" strokeWidth="1.8" fill="none" /></svg></ComboArrow>
              </Combo>
              <Sliver />
            </FloatBody>
          </Float>
        </Canvas>
        <VScroll>
          <ScrollBtn><svg width="10" height="7" viewBox="0 0 10 7"><path d="M1 5.500l4-4 4 4" stroke="#3a4f8a" strokeWidth="1.8" fill="none" /></svg></ScrollBtn>
          <VThumb><Grip $v /></VThumb>
          <ScrollBtn><svg width="10" height="7" viewBox="0 0 10 7"><path d="M1 1.500l4 4 4-4" stroke="#3a4f8a" strokeWidth="1.8" fill="none" /></svg></ScrollBtn>
        </VScroll>
      </Middle>
      <HScrollRow>
        <ScrollBtn><svg width="7" height="10" viewBox="0 0 7 10"><path d="M5.500 1l-4 4 4 4" stroke="#3a4f8a" strokeWidth="1.8" fill="none" /></svg></ScrollBtn>
        <HThumb><Grip /></HThumb>
        <ScrollBtn><svg width="7" height="10" viewBox="0 0 7 10"><path d="M1.500 1l4 4-4 4" stroke="#3a4f8a" strokeWidth="1.8" fill="none" /></svg></ScrollBtn>
        <Corner />
      </HScrollRow>
      <LayerBar>
        {Array.from({ length: 20 }, (_, i) => i + 1).map(n => (
          <ToolBtn key={n} $active={n === 1 || n === 4}><LayerIcon n={n} on={n === 1 || n === 4} /></ToolBtn>
        ))}
        <Sep />
        <ToolBtn>{lay1}</ToolBtn><ToolBtn>{lay2}</ToolBtn><ToolBtn>{lay3}</ToolBtn>
        <Sep />
        <ToolBtn>{lay4}</ToolBtn>
        <Sep />
        {[1, 2, 3, 4, 5].map(n => <ToolBtn key={n}><BoxIcon n={n} /></ToolBtn>)}
        <ToolEnd />
      </LayerBar>
      <StatusBar>
        <StatusCell $w={855} $pl={2}>Premi il tasto F1 per la Guida</StatusCell>
        <StatusCell $w={276} $pl={2}>Ro42440/230mm/Livello 3</StatusCell>
        <StatusCell $w={68} $pl={5} $line>&lt;- 217 -&gt;</StatusCell>
        <StatusCell $w={41} $pl={4} $line>-00843</StatusCell>
        <StatusCell $w={40} $pl={4} $line>-01380</StatusCell>
      </StatusBar>
      <Taskbar>
        <StartBtn>
          <svg width="20" height="20" viewBox="0 0 19 19">
            <path d="M2 4c2-1 4-1 6 0v5c-2-1-4-1-6 0z" fill="#e85a2a" /><path d="M9 4.500c2 1 4 1 6 0v5c-2 1-4 1-6 0z" fill="#7cc840" />
            <path d="M2 10c2-1 4-1 6 0v5c-2-1-4-1-6 0z" fill="#4a8af0" /><path d="M9 10.500c2 1 4 1 6 0v5c-2 1-4 1-6 0z" fill="#f8d040" />
          </svg>
          <StartText>start</StartText>
        </StartBtn>
        <Quick>
          <QuickIcon><svg width="17" height="17" viewBox="0 0 18 18"><rect x="2" y="2" width="14" height="14" rx="3" fill="#dde6f6" stroke="#556" /><path d="M6 9h6M6 6h6M6 12h4" stroke="#2a4a9a" strokeWidth="1.5" /></svg></QuickIcon>
          <QuickIcon><svg width="17" height="17" viewBox="0 0 18 18"><circle cx="9" cy="9" r="7.500" fill="#e8ecf4" stroke="#778" /><circle cx="9" cy="9" r="3.500" fill="#334" /><path d="M8 7l3 2-3 2z" fill="#e86030" /></svg></QuickIcon>
          <QuickIcon><svg width="18" height="18" viewBox="0 0 18 18"><text x="2" y="15" fontSize="17" fontStyle="italic" fontFamily="Liberation Serif" fill="#bfe4fb">e</text><path d="M3 14C2 8 10 1 16 2" stroke="#f0c040" fill="none" strokeWidth="1.3" /></svg></QuickIcon>
          <QuickIcon><svg width="17" height="17" viewBox="0 0 18 18"><circle cx="9" cy="9" r="8" fill="#e03a2a" /><path d="M9 9L16.800 8A8 8 0 0 1 6 16.500z" fill="#f6c21a" /><path d="M9 9L6 16.500A8 8 0 0 1 2 5z" fill="#3aa84a" /><circle cx="9" cy="9" r="4" fill="#4a88e8" stroke="#fff" /></svg></QuickIcon>
        </Quick>
        <TaskBtn $on $w={159}>
          <svg width="17" height="17" viewBox="0 0 18 18"><path d="M1 9h9M1 12h9M2 15h9" stroke="#c01818" strokeWidth="2" /><path d="M2 6l9-4" stroke="#223" strokeWidth="2" /><rect x="9" y="3" width="7" height="10" fill="#fff" stroke="#111" /></svg>
          WinTrack  V8.0 - [BU...
        </TaskBtn>
        <TaskBtn $w={157}>
          <svg width="17" height="18" viewBox="0 0 18 18"><path d="M5 2l3 8M9 1v9M13 2l-3 8" stroke="#e8c040" strokeWidth="2" /><path d="M6 10h6l-1 7H7z" fill="#c04030" /></svg>
          APR2016SOTTO - Paint
        </TaskBtn>
        <Links>Collegamenti<Chevron>»</Chevron></Links>
        <Tray>
          {tray.map((t, i) => <TrayIcon key={i}>{t}</TrayIcon>)}
          <Clock>22.30</Clock>
        </Tray>
      </Taskbar>
    </Win>
  );
}
